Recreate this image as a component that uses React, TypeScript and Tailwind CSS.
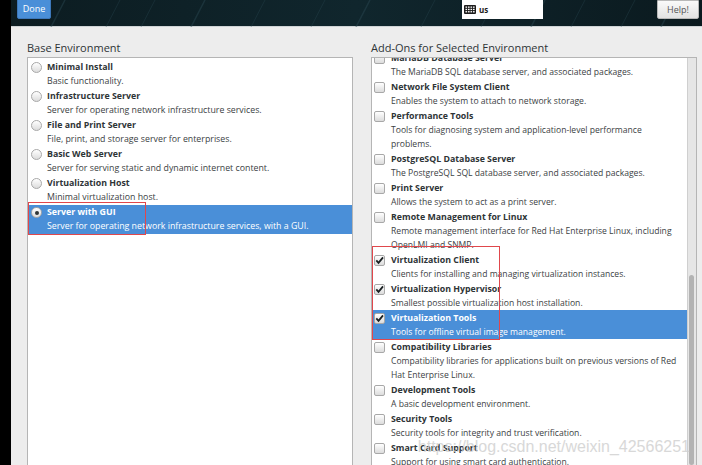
import React from "react";

// ─── Data ───────────────────────────────────────────────────────────────────────

interface Env {
  title: string;
  desc: string[];
  selected?: boolean;
}

interface Addon {
  title: string;
  desc: string[];
  checked?: boolean;
  selected?: boolean;
}

const BASE_ENVS: Env[] = [
  { title: "Minimal Install", desc: ["Basic functionality."] },
  { title: "Infrastructure Server", desc: ["Server for operating network infrastructure services."] },
  { title: "File and Print Server", desc: ["File, print, and storage server for enterprises."] },
  { title: "Basic Web Server", desc: ["Server for serving static and dynamic internet content."] },
  { title: "Virtualization Host", desc: ["Minimal virtualization host."] },
  {
    title: "Server with GUI",
    desc: ["Server for operating network infrastructure services, with a GUI."],
    selected: true,
  },
];

const ADDONS: Addon[] = [
  { title: "MariaDB Database Server", desc: ["The MariaDB SQL database server, and associated packages."] },
  { title: "Network File System Client", desc: ["Enables the system to attach to network storage."] },
  {
    title: "Performance Tools",
    desc: ["Tools for diagnosing system and application-level performance", "problems."],
  },
  { title: "PostgreSQL Database Server", desc: ["The PostgreSQL SQL database server, and associated packages."] },
  { title: "Print Server", desc: ["Allows the system to act as a print server."] },
  {
    title: "Remote Management for Linux",
    desc: ["Remote management interface for Red Hat Enterprise Linux, including", "OpenLMI and SNMP."],
  },
  { title: "Virtualization Client", desc: ["Clients for installing and managing virtualization instances."], checked: true },
  { title: "Virtualization Hypervisor", desc: ["Smallest possible virtualization host installation."], checked: true },
  {
    title: "Virtualization Tools",
    desc: ["Tools for offline virtual image management."],
    checked: true,
    selected: true,
  },
  {
    title: "Compatibility Libraries",
    desc: ["Compatibility libraries for applications built on previous versions of Red", "Hat Enterprise Linux."],
  },
  { title: "Development Tools", desc: ["A basic development environment."] },
  { title: "Security Tools", desc: ["Security tools for integrity and trust verification."] },
  { title: "Smart Card Support", desc: ["Support for using smart card authentication."] },
];

// ─── Small widgets ──────────────────────────────────────────────────────────────

function Radio({ on }: { on?: boolean }) {
  return (
    <span className="mt-[2px] w-[11px] h-[11px] shrink-0 rounded-full border border-[#a8a8a8] bg-gradient-to-b from-[#ffffff] to-[#dcdcdc] flex items-center justify-center">
      {on && <span className="w-[4px] h-[4px] rounded-full bg-[#2e3436]" />}
    </span>
  );
}

function Check({ on }: { on?: boolean }) {
  return (
    <span className="mt-[2px] w-[11px] h-[11px] shrink-0 rounded-[2px] border border-[#a8a8a8] bg-gradient-to-b from-[#ffffff] to-[#dcdcdc] flex items-center justify-center">
      {on && (
        <svg width="11" height="11" viewBox="0 0 11 11">
          <path d="M1.6 5.4 L4.3 8.3 L9.8 1.6" fill="none" stroke="#1a2022" strokeWidth="2.2" />
        </svg>
      )}
    </span>
  );
}

function KeyboardIcon() {
  return (
    <svg width="12" height="9" viewBox="0 0 12 9">
      <rect x="0" y="0" width="12" height="9" rx="1" fill="#1c1c1c" />
      {[1.5, 3.8, 6.1].map(y =>
        [1.5, 4, 6.5, 9].map(x => (
          <rect key={`${x}-${y}`} x={x} y={y} width="1.6" height="1.3" fill="#ffffff" />
        ))
      )}
    </svg>
  );
}

// ─── Component ──────────────────────────────────────────────────────────────────

export default function App() {
  return (
    <div
      className="w-[702px] h-[465px] overflow-hidden flex bg-black text-[#2e3436]"
      style={{ fontFamily: '"Open Sans", "DejaVu Sans", sans-serif' }}
    >
      {/* Black left edge */}
      <div className="w-[11px] shrink-0 bg-black" />

      <div className="flex-1 flex flex-col bg-[#ededed]">
        {/* Header */}
        <div className="relative h-[27px] shrink-0 bg-gradient-to-r from-[#0c1c21] via-[#10262d] to-[#0b1a1f] border-b border-[#cfd4d6] flex items-start">
          <svg className="absolute inset-0" width="691" height="27" viewBox="0 0 691 27">
            {[40, 95, 130, 180, 240, 300, 345, 410, 470, 520, 560, 610, 650].map((x, i) => (
              <line key={i} x1={x + 14} y1="0" x2={x} y2="27" stroke="#2b4953" strokeWidth={i % 3 === 0 ? 1.5 : 0.8} opacity="0.45" />
            ))}
          </svg>
          <div className="relative ml-[6px] -mt-[2px] w-[34px] h-[21px] rounded-b-[2px] bg-[#4a8fd8] border border-[#3d78bb] flex items-center justify-center text-[9px] text-white">
            Done
          </div>
          <div className="relative ml-[411px] w-[81px] h-[19px] bg-white flex items-center gap-[3px] pl-[2px]">
            <KeyboardIcon />
            <span className="text-[8px] font-bold text-[#1c1c1c]">us</span>
          </div>
          <div className="relative ml-[114px] w-[42px] h-[19px] rounded-b-[2px] bg-gradient-to-b from-[#fafafa] to-[#e2e2e2] border border-[#b8b8b8] flex items-center justify-center text-[9px] text-[#555]">
            Help!
          </div>
        </div>

        {/* Body */}
        <div className="flex-1 flex pl-[16px] pt-[12px] gap-[18px] min-h-0">
          {/* Base environment */}
          <div className="w-[326px] flex flex-col min-h-0">
            <div className="text-[11px] leading-[18px] h-[18px] text-[#2e3436]">Base Environment</div>
            <div className="relative flex-1 bg-white border border-[#b5b5b5] border-b-0 pt-[2px]">
              {BASE_ENVS.map(env => (
                <div
                  key={env.title}
                  className={`flex gap-[5px] pl-[3px] h-[29px] whitespace-nowrap ${env.selected ? "bg-[#4a8fd8] text-white" : ""}`}
                >
                  <Radio on={env.selected} />
                  <div className="pt-[1px]">
                    <div className="text-[8.8px] font-bold leading-[13px]">{env.title}</div>
                    {env.desc.map(d => (
                      <div key={d} className={`text-[8.8px] leading-[14px] ${env.selected ? "text-white" : "text-[#3b4143]"}`}>
                        {d}
                      </div>
                    ))}
                  </div>
                </div>
              ))}
              <div className="absolute left-0 top-[144px] w-[118px] h-[33px] border border-[#e0474c]" />
            </div>
          </div>

          {/* Add-ons */}
          <div className="w-[326px] flex flex-col min-h-0">
            <div className="text-[11px] leading-[18px] h-[18px] text-[#2e3436]">Add-Ons for Selected Environment</div>
            <div className="relative flex-1 flex bg-white border border-[#b5b5b5] border-b-0 min-h-0">
              <div className="flex-1 overflow-hidden">
                <div className="-mt-[8px]">
                  {ADDONS.map(a => (
                    <div
                      key={a.title}
                      className={`flex gap-[6px] pl-[2px] pt-[1px] whitespace-nowrap ${a.selected ? "bg-[#4a8fd8] text-white" : ""}`}
                    >
                      <Check on={a.checked} />
                      <div>
                        <div className="text-[8.8px] font-bold leading-[14px]">{a.title}</div>
                        {a.desc.map(d => (
                          <div key={d} className={`text-[8.6px] leading-[14px] ${a.selected ? "text-white" : "text-[#3b4143]"}`}>
                            {d}
                          </div>
                        ))}
                      </div>
                    </div>
                  ))}
                </div>
              </div>
              {/* Scrollbar */}
              <div className="w-[9px] shrink-0 bg-[#e6e6e6] border-l border-[#cfcfcf] pt-[217px] pl-[1px]">
                <div className="w-[5px] h-full rounded-full bg-[#b3b3b3]" />
              </div>
              <div className="absolute left-0 top-[188px] w-[128px] h-[94px] border border-[#e0474c]" />
              <div
                className="absolute right-[6px] bottom-[9px] text-[16px] leading-[18px] text-[#cfcfcf] opacity-80 pointer-events-none whitespace-nowrap"
                style={{ fontFamily: '"Liberation Sans", sans-serif' }}
              >
                https://blog.csdn.net/weixin_42566251
              </div>
            </div>
          </div>
        </div>
      </div>
    </div>
  );
}
